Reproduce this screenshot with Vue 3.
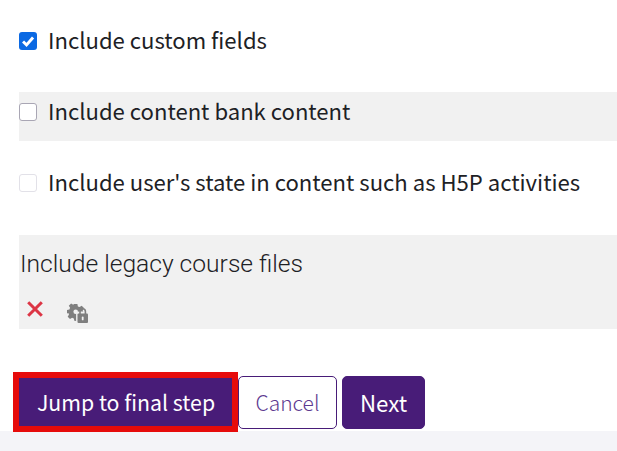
<script setup>
const rows = [
  { label: 'Include custom fields', cls: 'checked', shaded: false },
  { label: 'Include content bank content', cls: 'empty', shaded: true },
  { label: "Include user's state in content such as H5P activities", cls: 'disabled', shaded: false }
]
</script>

<template>
  <div class="page">
    <div class="form">
      <div v-for="r in rows" :key="r.label" class="row" :class="{ shaded: r.shaded }">
        <span class="box" :class="r.cls">
          <svg v-if="r.cls === 'checked'" viewBox="0 0 16 16" width="18" height="18">
            <path d="M3.6 8.4 6.7 11.5 12.5 4.9" fill="none" stroke="#fff" stroke-width="2.6" />
          </svg>
        </span>
        <span class="label">{{ r.label }}</span>
      </div>
      <div class="legacy">
        <div class="legacy-title">Include legacy course files</div>
        <div class="icons">
          <svg class="cross" viewBox="0 0 16 16" width="16" height="16">
            <path d="M1.2 1.2 14.8 14.8M14.8 1.2 1.2 14.8" stroke="#dc3545" stroke-width="3" fill="none" />
          </svg>
          <svg class="gear" viewBox="0 0 22 20" width="22" height="20">
            <path fill="#7f7f7f" d="M7 0h3.4l.5 2.4 1.7.7 2.1-1.3 2.3 2.3-1.3 2.1.5 1.3H12a3 3 0 0 0-2.8 3v6.4l-1.9-.1-.5-2.4-1.7-.7-2.1 1.3-2.3-2.3 1.3-2.1-.7-1.7L0 9.4V6l2.4-.5.7-1.7-1.3-2.1L4.100-.6l2.100 1.300z" transform="translate(0 1)" />
            <circle cx="8.700" cy="8.800" r="2.300" fill="#f1f1f1" />
            <path fill="#f1f1f1" d="M9.500 10h12v10h-12z" />
            <rect x="10.500" y="10.500" width="10.500" height="9.500" rx="1" fill="#7f7f7f" />
            <path fill="none" stroke="#7f7f7f" stroke-width="1.600" d="M13 11V8.500a2.700 2.700 0 0 1 5.400 0V11" />
            <rect x="14.800" y="13.500" width="1.800" height="3.800" rx=".9" fill="#f1f1f1" />
          </svg>
        </div>
      </div>
    </div>
    <div class="actions">
      <button class="btn primary marked">Jump to final step</button>
      <button class="btn outline">Cancel</button>
      <button class="btn primary next">Next</button>
    </div>
    <div class="footer"></div>
  </div>
</template>

<style scoped>
.page {
  width: 617px;
  height: 451px;
  overflow: hidden;
  background: #fff;
  display: flex;
  flex-direction: column;
  font-family: "Noto Sans CJK SC", sans-serif;
}
.form {
  padding: 21px 0 0 19px;
  display: flex;
  flex-direction: column;
  gap: 22px;
}
.row {
  height: 49px;
  box-sizing: border-box;
  padding-bottom: 9px;
  display: flex;
  align-items: center;
  font-size: 22.100px;
  color: #1d2125;
}
.label {
  margin-bottom: 4px;
}
.shaded, .legacy {
  background: #f1f1f1;
}
.box {
  width: 18px;
  height: 18px;
  border-radius: 3px;
  box-sizing: border-box;
  margin-right: 11px;
  flex: none;
  display: block;
}
.box svg { display: block; }
.checked { background: #0b69e3; }
.empty { background: #fff; border: 1.5px solid #a9a6b4; }
.disabled { background: #fff; border: 1px solid #e2e1e8; }
.legacy {
  height: 94px;
  margin-top: 1px;
  box-sizing: border-box;
}
.legacy-title {
  font-family: Roboto, sans-serif;
  font-weight: 300;
  font-size: 24.6px;
  line-height: 28px;
  padding: 15px 0 0 1px;
  color: #1d2125;
}
.icons {
  display: flex;
  align-items: flex-start;
  padding: 23px 0 0 8px;
  gap: 24px;
}
.gear { margin-top: 2px; }
.actions {
  display: flex;
  gap: 5px;
  padding-left: 19px;
  margin-top: 47px;
}
.btn {
  height: 53px;
  box-sizing: border-box;
  border-radius: 5px;
  font-family: "Noto Sans CJK SC", sans-serif;
  font-size: 21.300px;
  padding: 0 0 2px;
  cursor: pointer;
}
.primary {
  background: #481c78;
  border: 1px solid #481c78;
  color: #fff;
}
.marked { width: 214px; position: relative; border-radius: 0; }
.marked::after {
  content: "";
  position: absolute;
  left: -7px;
  right: -6px;
  top: -5px;
  bottom: -4px;
  border: 6px solid #e60b0b;
  pointer-events: none;
}
.outline {
  width: 99px;
  background: #fff;
  border: 1px solid #481c78;
  color: #5d3a90;
  font-weight: 300;
  font-size: 21px;
}
.next { width: 83px; font-size: 22.300px; }
.footer {
  margin-top: 2px;
  flex: 1;
  background: #f4f4f8;
}
</style>
